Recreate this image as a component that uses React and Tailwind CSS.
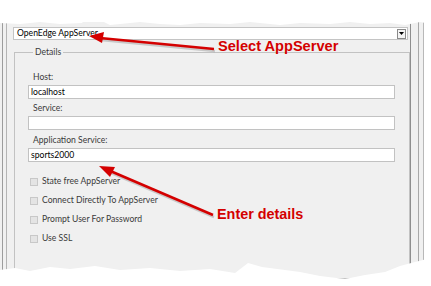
import React from "react";

const ui = { fontFamily: "Lato, 'Liberation Sans', sans-serif" };
const ann = { fontFamily: "'Liberation Sans', Arial, sans-serif" };

function Field({ label, value, labelMt }) {
  return (
    <div className={labelMt}>
      <div className="h-[12px] leading-[12px] pl-[5px] text-[8.6px] text-[#3a3a3a]">{label}</div>
      <div className="mt-[2px] h-[14px] w-[367px] border border-[#c2c2c2] bg-white pl-[2px] text-[8.6px] leading-[12px] text-black">
        {value}
      </div>
    </div>
  );
}

function Check({ label }) {
  return (
    <div className="flex h-[19px] items-center">
      <div className="ml-[2px] h-[8px] w-[8px] border border-[#c8c8c8] bg-[#e4e4e4]" />
      <span className="ml-[4px] text-[8.6px] text-[#3a3a3a]">{label}</span>
    </div>
  );
}

export default function App() {
  return (
    <div className="relative h-[286px] w-[431px] overflow-hidden bg-white" style={ui}>
      <div className="mt-[22px] flex h-[257px] w-[424px] bg-[#f0f0f0]">
        <div className="flex h-full w-[13px]">
          <div className="w-[2px]" />
          <div className="w-px bg-[#9c9c9c]" />
          <div className="w-[3px]" />
          <div className="w-px bg-[#b4b4b4]" />
        </div>
        <div className="flex w-[397px] flex-col">
          <div className="mt-[5px] flex h-[13px] w-[395px] items-center border border-[#c4c4c4] bg-white pl-[3px]">
            <span className="flex-1 text-[8.6px] leading-[11px] text-black">OpenEdge AppServer</span>
            <div className="mr-px flex h-[10px] w-[9px] items-center justify-center border border-[#8a8a8a] bg-[#f4f4f4]">
              <svg width="5" height="3" viewBox="0 0 5 3"><path d="M0 0h5L2.5 3z" fill="#000" /></svg>
            </div>
          </div>
          <fieldset className="ml-px mt-[6px] h-[300px] border border-[#c2c2c2] pl-[13px]">
            <legend className="ml-[5px] px-[2px] text-[8.6px] leading-[12px] text-[#3a3a3a]">Details</legend>
            <Field label="Host:" value="localhost" labelMt="mt-[13px]" />
            <Field label="Service:" value="" labelMt="mt-[3px]" />
            <Field label="Application Service:" value="sports2000" labelMt="mt-[4px]" />
            <div className="mt-[10px]">
              <Check label="State free AppServer" />
              <Check label="Connect Directly To AppServer" />
              <Check label="Prompt User For Password" />
              <Check label="Use SSL" />
            </div>
          </fieldset>
        </div>
        <div className="flex h-full">
          <div className="w-px bg-[#8e8e8e]" />
          <div className="w-[7px]" />
          <div className="w-px bg-[#a8a8a8]" />
          <div className="w-[4px]" />
          <div className="w-px bg-[#b8b8b8]" />
        </div>
      </div>

      <svg className="absolute left-0 top-0" width="431" height="286" viewBox="0 0 431 286">
        <path
          d="M0 0H431V24L420 22L405 25L390 23L370 24L350 22L330 24L300 23L280 25L250 22L230 24L200 23L180 25L160 24L140 22L110 25L100 20L88 16L82 23L60 24L40 22L20 24L0 23Z"
          fill="#fff"
        />
        <path
          d="M0 270L15 268L30 271L50 267L70 269L95 266L120 270L150 268L180 271L210 269L235 273L248 263L262 267L285 270L300 272L320 276L345 279L365 275L385 272L400 266L415 262L431 258V286H0Z"
          fill="#fff"
        />
      </svg>

      <svg className="absolute left-0 top-0" width="431" height="286" viewBox="0 0 431 286">
        <g opacity="0.25" transform="translate(1 2)">
          <line x1="214" y1="49" x2="100" y2="38" stroke="#555" strokeWidth="2.5" />
          <line x1="213" y1="215" x2="108" y2="170" stroke="#555" strokeWidth="2.5" />
        </g>
        <line x1="214" y1="49" x2="100" y2="38" stroke="#d40000" strokeWidth="2.5" />
        <path d="M89 36L104 32L102 43Z" fill="#d40000" />
        <line x1="213" y1="215" x2="108" y2="170" stroke="#d40000" strokeWidth="2.5" />
        <path d="M99 166L115 167L110 177Z" fill="#d40000" />
      </svg>

      <div className="absolute left-[218px] top-[38px] text-[14.6px] font-bold leading-[17px] text-[#d40000]" style={ann}>
        Select AppServer
      </div>
      <div className="absolute left-[217px] top-[206px] text-[14.4px] font-bold leading-[17px] text-[#d40000]" style={ann}>
        Enter details
      </div>
    </div>
  );
}
